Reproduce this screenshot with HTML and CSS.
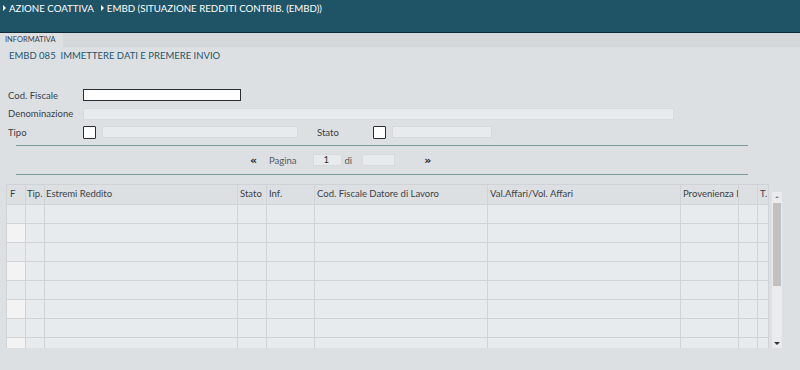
FILE: index.html
```html
<!DOCTYPE html>
<html>
<head>
<meta charset="utf-8">
<link rel="stylesheet" href="styles.css">
</head>
<body>
<header class="topbar">
  <nav class="crumbs">
    <span class="crumb"><span class="tri"></span>AZIONE COATTIVA</span>
    <span class="crumb"><span class="tri"></span>EMBD (SITUAZIONE REDDITI CONTRIB. (EMBD))</span>
  </nav>
</header>
<div class="tabs">
  <div class="tab">INFORMATIVA</div>
</div>
<main class="content">
  <div class="msg">EMBD 085&nbsp; IMMETTERE DATI E PREMERE INVIO</div>
  <form class="form">
    <div class="row r1">
      <label class="lbl">Cod. Fiscale</label>
      <div class="inp inp-cf"></div>
    </div>
    <div class="row r2">
      <label class="lbl">Denominazione</label>
      <div class="inp ro inp-den"></div>
    </div>
    <div class="row r3">
      <label class="lbl">Tipo</label>
      <div class="chk"></div>
      <div class="inp ro inp-tipo"></div>
      <label class="lbl lbl-stato">Stato</label>
      <div class="chk"></div>
      <div class="inp ro inp-stato"></div>
    </div>
  </form>
  <div class="pager">
    <span class="arr">«</span>
    <span class="plbl pg">Pagina</span>
    <div class="inp ro pnum">1</div>
    <span class="plbl di">di</span>
    <div class="inp ro ptot"></div>
    <span class="arr arr-r">»</span>
  </div>
  <div class="grid-wrap">
    <div class="grid">
      <div class="tr th">
        <div class="c c1">F</div><div class="c c2">Tip.</div><div class="c c3">Estremi Reddito</div><div class="c c4">Stato</div><div class="c c5">Inf.</div><div class="c c6">Cod. Fiscale Datore di Lavoro</div><div class="c c7">Val.Affari/Vol. Affari</div><div class="c c8">Provenienza I</div><div class="c c9">I</div><div class="c c10">T.</div>
      </div>
      <div class="tr"><div class="c c1"></div><div class="c c2"></div><div class="c c3"></div><div class="c c4"></div><div class="c c5"></div><div class="c c6"></div><div class="c c7"></div><div class="c c8"></div><div class="c c9"></div><div class="c c10"></div></div>
      <div class="tr alt"><div class="c c1"></div><div class="c c2"></div><div class="c c3"></div><div class="c c4"></div><div class="c c5"></div><div class="c c6"></div><div class="c c7"></div><div class="c c8"></div><div class="c c9"></div><div class="c c10"></div></div>
      <div class="tr"><div class="c c1"></div><div class="c c2"></div><div class="c c3"></div><div class="c c4"></div><div class="c c5"></div><div class="c c6"></div><div class="c c7"></div><div class="c c8"></div><div class="c c9"></div><div class="c c10"></div></div>
      <div class="tr alt"><div class="c c1"></div><div class="c c2"></div><div class="c c3"></div><div class="c c4"></div><div class="c c5"></div><div class="c c6"></div><div class="c c7"></div><div class="c c8"></div><div class="c c9"></div><div class="c c10"></div></div>
      <div class="tr"><div class="c c1"></div><div class="c c2"></div><div class="c c3"></div><div class="c c4"></div><div class="c c5"></div><div class="c c6"></div><div class="c c7"></div><div class="c c8"></div><div class="c c9"></div><div class="c c10"></div></div>
      <div class="tr alt"><div class="c c1"></div><div class="c c2"></div><div class="c c3"></div><div class="c c4"></div><div class="c c5"></div><div class="c c6"></div><div class="c c7"></div><div class="c c8"></div><div class="c c9"></div><div class="c c10"></div></div>
      <div class="tr"><div class="c c1"></div><div class="c c2"></div><div class="c c3"></div><div class="c c4"></div><div class="c c5"></div><div class="c c6"></div><div class="c c7"></div><div class="c c8"></div><div class="c c9"></div><div class="c c10"></div></div>
      <div class="tr alt"><div class="c c1"></div><div class="c c2"></div><div class="c c3"></div><div class="c c4"></div><div class="c c5"></div><div class="c c6"></div><div class="c c7"></div><div class="c c8"></div><div class="c c9"></div><div class="c c10"></div></div>
    </div>
    <div class="sbar">
      <div class="sb-up"></div>
      <div class="sb-thumb"></div>
      <div class="sb-down"></div>
    </div>
  </div>
</main>
</body>
</html>
```

FILE: styles.css
```css
* { box-sizing: border-box; }
html, body { margin: 0; padding: 0; }
body {
  width: 800px;
  height: 370px;
  overflow: hidden;
  background: #dde0e3;
  font-family: Lato, "Liberation Sans", sans-serif;
  color: #3a3f44;
}
.topbar {
  height: 33px;
  background: #1f5466;
  border-bottom: 1px solid #0f2c36;
}
.crumbs {
  display: flex;
  gap: 7px;
  padding: 1px 0 0 3px;
  color: #ffffff;
  font-size: 9.7px;
  line-height: 14px;
}
.crumb { display: flex; align-items: center; }
.tri {
  width: 0; height: 0;
  border-top: 3px solid transparent;
  border-bottom: 3px solid transparent;
  border-left: 3px solid #ffffff;
  margin-right: 3px;
}
.tabs {
  height: 14px;
  background: #d4d8db;
  display: flex;
}
.tab {
  width: 63px;
  background: #dde0e3;
  font-size: 7.5px;
  line-height: 14px;
  padding-left: 5px;
  color: #3a3f44;
}
.msg {
  padding: 3px 0 0 9px;
  height: 34px;
  font-size: 9.5px;
  line-height: 12px;
  color: #24546a;
}
.form {
  display: flex;
  flex-direction: column;
  padding-left: 8px;
  margin: 7px 0 0;
}
.row {
  display: flex;
  align-items: center;
}
.r1 { height: 14px; margin-bottom: 5px; }
.r2 { height: 13px; margin-bottom: 5px; }
.r3 { height: 14px; }
.lbl {
  width: 75px;
  font-size: 9.5px;
  color: #3a3f44;
}
.inp {
  height: 12px;
  border: 1px solid #2a2e31;
  background: #ffffff;
  font-size: 9.5px;
  line-height: 10px;
}
.ro {
  border: 1px solid #d7dbde;
  background: #e8ebee;
}
.inp-cf { width: 158px; }
.inp-den { width: 591px; }
.chk {
  width: 13px; height: 13px;
  border: 1px solid #2a2e31;
  background: #ffffff;
  border-radius: 1px;
  margin-right: 6px;
}
.inp-tipo { width: 196px; }
.lbl-stato { width: 56px; margin-left: 19px; }
.inp-stato { width: 100px; }
.pager {
  margin: 6px 0 0 16px;
  width: 732px;
  border-top: 1px solid #7c9aa4;
  border-bottom: 1px solid #7c9aa4;
  height: 30px;
  display: flex;
  align-items: center;
  padding-left: 234px;
  font-size: 9.5px;
}
.arr {
  font-family: "DejaVu Sans", sans-serif;
  font-weight: bold;
  font-size: 11px;
  color: #1e2124;
  width: 19px;
}
.arr-r { margin-left: 29px; }
.plbl { color: #555a5f; }
.pg { margin-right: 16px; }
.pnum { width: 29px; padding-left: 10px; color: #333; line-height: 10px; }
.di { margin-left: 3px; margin-right: 10px; }
.ptot { width: 33px; }
.grid-wrap {
  display: flex;
  margin: 9px 0 0 6px;
  height: 164px;
}
.grid {
  width: 763px;
  height: 164px;
  overflow: hidden;
  border-top: 1px solid #cfd3d6;
}
.tr {
  display: flex;
  height: 19px;
  border-bottom: 1px solid #d1d4d7;
  background: #e8ebee;
}
.th {
  height: 20px;
  background: #dde0e3;
  font-size: 9.5px;
  color: #3a3f44;
}
.c {
  border-right: 1px solid #d1d4d7;
  padding: 5px 0 0 3px;
  white-space: nowrap;
  overflow: hidden;
}
.th .c { padding-top: 3px; }
.c1 { width: 20px; border-left: 1px solid #d1d4d7; }
.alt .c1 { background: #f3f3f3; }
.c2 { width: 19px; padding-left: 1px; }
.c3 { width: 193px; padding-left: 1px; }
.c4 { width: 29px; padding-left: 2px; }
.c5 { width: 48px; padding-left: 2px; }
.c6 { width: 173px; padding-left: 2px; }
.c7 { width: 193px; padding-left: 2px; }
.c8 { width: 58px; padding-left: 2px; }
.c9 { width: 19px; color: transparent; }
.c10 { width: 11px; padding-left: 2px; }
.sbar {
  margin: 8px 0 0 3px;
  width: 10px;
  height: 156px;
  background: #e9ebed;
  display: flex;
  flex-direction: column;
  align-items: center;
}
.sb-up, .sb-down {
  height: 11px;
  width: 10px;
  position: relative;
}
.sb-up::after, .sb-down::after {
  content: "";
  position: absolute;
  width: 0; height: 0;
}
.sb-up::after {
  top: 4px; left: 3px;
  border-left: 2px solid transparent;
  border-right: 2px solid transparent;
  border-bottom: 2px solid #888;
}
.sb-down::after {
  top: 5px; left: 2px;
  border-left: 3px solid transparent;
  border-right: 3px solid transparent;
  border-top: 3px solid #333;
}
.sb-thumb {
  width: 8px;
  height: 83px;
  background: #c1c1c1;
}
.sb-down { margin-top: auto; }
```
